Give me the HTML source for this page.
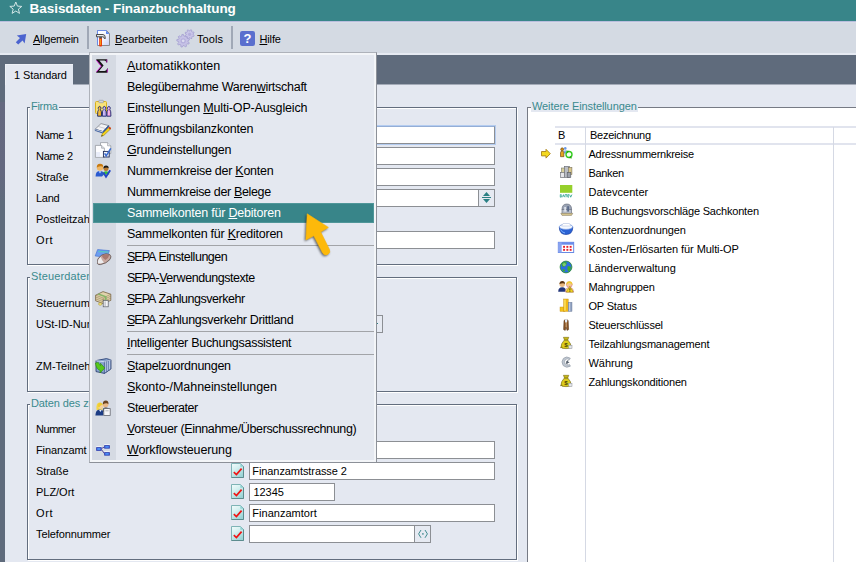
<!DOCTYPE html>
<html><head><meta charset="utf-8">
<style>
*{box-sizing:border-box;margin:0;padding:0}
html,body{width:856px;height:562px;overflow:hidden;background:#e4e8f1;font-family:"Liberation Sans",sans-serif;font-size:11px;color:#000}
.a{position:absolute}
.tl{white-space:nowrap;line-height:13px;font-size:11px}
.tl u,.mi u{text-decoration-thickness:1px;text-underline-offset:1px}
.fs{border:1px solid #626d7e;box-shadow:1px 1px 0 #fff, inset 1px 1px 0 #fff}
.lg{color:#3a8a8e;background:#e4e8f1;white-space:nowrap;line-height:13px;height:12px;overflow:hidden;padding:0 1px;letter-spacing:-0.1px}
.in{background:#fff;border:1px solid #8c8f94;height:18px;line-height:15px;padding-left:3px;white-space:nowrap;}
#menu{left:89px;top:52px;width:288px;height:411px;background:#e4e8f0;border:1px solid;border-color:#aeb2ba #8c9098 #8c9098 #aeb2ba;box-shadow:inset 0 0 0 2px #f3f5f8}
#gut{left:2px;top:2px;width:24px;height:405px;background:#d5dae3}
.mi{left:37px;white-space:nowrap;font-size:12.5px;line-height:15px;color:#000}
.sq{letter-spacing:-1px}
.sep{left:37px;width:247px;height:1px;background:#a2a4a8}
</style></head><body>
<!-- title bar -->
<div class="a" style="left:0;top:0;width:856px;height:21px;background:#388589"></div>
<div class="a" style="left:29.6px;top:1px;color:#fff;font-weight:bold;font-size:13.5px;line-height:16px;white-space:nowrap;letter-spacing:-0.052px">Basisdaten - Finanzbuchhaltung</div>
<!-- toolbar -->
<div class="a" style="left:0;top:21px;width:856px;height:34px;background:#d4dae3"></div>
<div class="a" style="left:0;top:53px;width:856px;height:2px;background:#e6eaf2"></div>
<div class="a" style="left:0;top:21px;width:856px;height:1px;background:#b9bedd"></div><div class="a" style="left:0;top:22px;width:856px;height:1px;background:#d9dce8"></div>
<div class="a tl" style="left:33px;top:33px;letter-spacing:-0.301px;"><u>A</u>llgemein</div>
<div class="a" style="left:87px;top:26px;width:2px;height:23px;background:#a0a8b6"></div>
<div class="a tl" style="left:115px;top:33px;letter-spacing:-0.062px;"><u>B</u>earbeiten</div>
<div class="a tl" style="left:197px;top:33px;letter-spacing:0.062px;">Tools</div>
<div class="a" style="left:231px;top:26px;width:2px;height:23px;background:#a0a8b6"></div>
<div class="a tl" style="left:259.5px;top:33px;letter-spacing:-0.143px;"><u>H</u>ilfe</div>
<!-- band + tab -->
<div class="a" style="left:0;top:55px;width:856px;height:29px;background:#5f6b7c"></div>
<div class="a" style="left:0;top:84px;width:5px;height:478px;background:#5f6b7c"></div><div class="a" style="left:0;top:102px;width:5px;height:100px;background:linear-gradient(#656980 0,#646880 70%,#5f6b7c 100%)"></div>
<div class="a" style="left:73px;top:84px;width:783px;height:1px;background:#a4abb8"></div><div class="a" style="left:5px;top:64px;width:68px;height:21px;background:#e4e8f1;border-top:1px solid #eef0f6;border-left:1px solid #eef0f6"></div>
<div class="a tl" style="left:14px;top:69px;letter-spacing:-0.103px;">1 Standard</div>

<!-- Firma -->
<div class="a fs" style="left:27px;top:107px;width:490px;height:158px"></div>
<div class="a lg" style="left:30px;top:100px;letter-spacing:-0.3px">Firma</div>
<div class="a tl" style="left:36px;top:129px;letter-spacing:-0.289px;">Name 1</div>
<div class="a tl" style="left:36px;top:150px;letter-spacing:-0.289px;">Name 2</div>
<div class="a tl" style="left:36px;top:171px;letter-spacing:-0.086px;">Straße</div>
<div class="a tl" style="left:36px;top:192px;letter-spacing:-0.246px;">Land</div>
<div class="a tl" style="left:36px;top:213px;">Postleitzahl</div>
<div class="a tl" style="left:36px;top:234px;letter-spacing:0.673px;">Ort</div>
<div class="a in" style="left:249px;top:126px;width:246px;border-color:#94aed6 #8c8f94 #8c8f94 #94aed6;box-shadow:0 0 0 1px #b4ccf0"></div>
<div class="a in" style="left:249px;top:147px;width:246px"></div>
<div class="a in" style="left:249px;top:168px;width:246px"></div>
<div class="a in" style="left:249px;top:189px;width:230px"></div>
<div class="a" style="left:478px;top:189px;width:17px;height:18px;border:1px solid #8c8f94;background:#e6eaf2"></div>
<div class="a in" style="left:249px;top:231px;width:246px"></div>

<!-- Steuerdaten -->
<div class="a fs" style="left:27px;top:277px;width:490px;height:115px"></div>
<div class="a lg" style="left:30px;top:270px;letter-spacing:0.15px">Steuerdaten</div>
<div class="a tl" style="left:36px;top:297px;">Steuernummer</div>
<div class="a tl" style="left:36px;top:318px;">USt-ID-Nummer</div>
<div class="a tl" style="left:36px;top:360px;">ZM-Teilnehmer</div>
<div class="a" style="left:366px;top:315px;width:17px;height:18px;border:1px solid #8c8f94;background:#e6eaf2"></div><div class="a" style="left:377px;top:323px;width:1px;height:1px;background:#2f8286"></div>

<!-- Daten -->
<div class="a fs" style="left:27px;top:404px;width:490px;height:156px"></div>
<div class="a lg" style="left:30px;top:397px">Daten des zuständigen Finanzamts</div>
<div class="a tl" style="left:36px;top:423px;letter-spacing:-0.462px;">Nummer</div>
<div class="a tl" style="left:36px;top:444px;letter-spacing:-0.095px;">Finanzamt</div>
<div class="a tl" style="left:36px;top:465px;letter-spacing:-0.086px;">Straße</div>
<div class="a tl" style="left:36px;top:486px;letter-spacing:-0.031px;">PLZ/Ort</div>
<div class="a tl" style="left:36px;top:507px;letter-spacing:0.673px;">Ort</div>
<div class="a tl" style="left:36px;top:528px;letter-spacing:-0.118px;">Telefonnummer</div>
<div class="a in" style="left:249px;top:441px;width:246px"></div>
<div class="a in" style="left:249px;top:462px;width:246px"></div>
<div class="a in" style="left:249px;top:483px;width:86px"></div>
<div class="a in" style="left:249px;top:504px;width:246px"></div>
<div class="a in" style="left:249px;top:525px;width:166px"></div>
<div class="a tl" style="left:252.3px;top:465px;letter-spacing:-0.082px;">Finanzamtstrasse 2</div>
<div class="a tl" style="left:253.5px;top:486px;letter-spacing:-0.059px;">12345</div>
<div class="a tl" style="left:252.3px;top:507px;letter-spacing:0.025px;">Finanzamtort</div>
<div class="a" style="left:414px;top:525px;width:17px;height:18px;border:1px solid #8c8f94;background:#e6eaf2"></div>
<svg class="a" style="left:231px;top:463px" width="14" height="16"><linearGradient id="ckg1" x1="0" y1="0" x2=".6" y2="1"><stop offset="0" stop-color="#f4fcfc"/><stop offset=".45" stop-color="#d4f0f0"/><stop offset="1" stop-color="#9cd4d6"/></linearGradient><path d="M0.5,0.5 H9.5 L12.5,3.5 V14.5 H0.5 Z" fill="url(#ckg1)" stroke="#7fb4b6" stroke-width="1"/><path d="M12.5,3.5 V14.5 H0.5" fill="none" stroke="#5c8c8e" stroke-width="1"/><path d="M9.3,0.6 V3.7 H12.4 Z" fill="#8fd0d2"/><path d="M2.8,9.2 L5.4,11.6 L10.6,5.6" fill="none" stroke="#f01414" stroke-width="1.7"/></svg>
<svg class="a" style="left:231px;top:484px" width="14" height="16"><linearGradient id="ckg2" x1="0" y1="0" x2=".6" y2="1"><stop offset="0" stop-color="#f4fcfc"/><stop offset=".45" stop-color="#d4f0f0"/><stop offset="1" stop-color="#9cd4d6"/></linearGradient><path d="M0.5,0.5 H9.5 L12.5,3.5 V14.5 H0.5 Z" fill="url(#ckg2)" stroke="#7fb4b6" stroke-width="1"/><path d="M12.5,3.5 V14.5 H0.5" fill="none" stroke="#5c8c8e" stroke-width="1"/><path d="M9.3,0.6 V3.7 H12.4 Z" fill="#8fd0d2"/><path d="M2.8,9.2 L5.4,11.6 L10.6,5.6" fill="none" stroke="#f01414" stroke-width="1.7"/></svg>
<svg class="a" style="left:231px;top:505px" width="14" height="16"><linearGradient id="ckg3" x1="0" y1="0" x2=".6" y2="1"><stop offset="0" stop-color="#f4fcfc"/><stop offset=".45" stop-color="#d4f0f0"/><stop offset="1" stop-color="#9cd4d6"/></linearGradient><path d="M0.5,0.5 H9.5 L12.5,3.5 V14.5 H0.5 Z" fill="url(#ckg3)" stroke="#7fb4b6" stroke-width="1"/><path d="M12.5,3.5 V14.5 H0.5" fill="none" stroke="#5c8c8e" stroke-width="1"/><path d="M9.3,0.6 V3.7 H12.4 Z" fill="#8fd0d2"/><path d="M2.8,9.2 L5.4,11.6 L10.6,5.6" fill="none" stroke="#f01414" stroke-width="1.7"/></svg>
<svg class="a" style="left:231px;top:526px" width="14" height="16"><linearGradient id="ckg4" x1="0" y1="0" x2=".6" y2="1"><stop offset="0" stop-color="#f4fcfc"/><stop offset=".45" stop-color="#d4f0f0"/><stop offset="1" stop-color="#9cd4d6"/></linearGradient><path d="M0.5,0.5 H9.5 L12.5,3.5 V14.5 H0.5 Z" fill="url(#ckg4)" stroke="#7fb4b6" stroke-width="1"/><path d="M12.5,3.5 V14.5 H0.5" fill="none" stroke="#5c8c8e" stroke-width="1"/><path d="M9.3,0.6 V3.7 H12.4 Z" fill="#8fd0d2"/><path d="M2.8,9.2 L5.4,11.6 L10.6,5.6" fill="none" stroke="#f01414" stroke-width="1.7"/></svg>

<!-- Right pane -->
<div class="a" style="left:527px;top:107px;width:340px;height:470px;background:#fff;border:1px solid #767a84"></div>
<div class="a" style="left:529px;top:108px;width:330px;height:4px;background:#fff"></div>
<div class="a lg" style="left:531px;top:100px">Weitere Einstellungen</div>
<div class="a" style="left:555px;top:126px;width:301px;height:2px;background:#e1e4ee"></div>
<div class="a" style="left:555px;top:143px;width:301px;height:2px;background:#e1e4ee"></div>
<div class="a" style="left:585px;top:127px;width:1px;height:435px;background:#d5d9e4"></div>
<div class="a" style="left:833px;top:127px;width:1px;height:435px;background:#d5d9e4"></div>
<div class="a tl" style="left:558px;top:129px;">B</div>
<div class="a tl" style="left:590px;top:129px;letter-spacing:-0.255px;">Bezeichnung</div>
<div class="a tl" style="left:588.5px;top:148px;letter-spacing:-0.25px;">Adressnummernkreise</div>
<div class="a tl" style="left:588.5px;top:167px;letter-spacing:-0.335px;">Banken</div>
<div class="a tl" style="left:588.5px;top:186px;letter-spacing:0.044px;">Datevcenter</div>
<div class="a tl" style="left:588.5px;top:205px;letter-spacing:-0.201px;">IB Buchungsvorschläge Sachkonten</div>
<div class="a tl" style="left:588.5px;top:224px;letter-spacing:-0.106px;">Kontenzuordnungen</div>
<div class="a tl" style="left:588.5px;top:243px;letter-spacing:-0.082px;">Kosten-/Erlösarten für Multi-OP</div>
<div class="a tl" style="left:588.5px;top:262px;letter-spacing:-0.01px;">Länderverwaltung</div>
<div class="a tl" style="left:588.5px;top:281px;letter-spacing:-0.145px;">Mahngruppen</div>
<div class="a tl" style="left:588.5px;top:300px;letter-spacing:-0.182px;">OP Status</div>
<div class="a tl" style="left:588.5px;top:319px;letter-spacing:-0.224px;">Steuerschlüssel</div>
<div class="a tl" style="left:588.5px;top:338px;letter-spacing:-0.18px;">Teilzahlungsmanagement</div>
<div class="a tl" style="left:588.5px;top:357px;letter-spacing:-0.049px;">Währung</div>
<div class="a tl" style="left:588.5px;top:376px;letter-spacing:-0.17px;">Zahlungskonditionen</div>

<svg class="a" style="left:0;top:0" width="856" height="562" viewBox="0 0 856 562">
<polygon points="15.8,2.0 17.4,6.1 21.8,6.4 18.4,9.1 19.5,13.4 15.8,11.0 12.1,13.4 13.2,9.1 9.8,6.4 14.2,6.1" fill="none" stroke="#d4e6e7" stroke-width="1" stroke-linejoin="miter"/>
<polygon points="16.8,35.6 26.2,33.9 24.6,43.4 22.6,40.6 18.2,44.6 15.8,42.2 20,38" fill="#4c64cf"/>
<defs><linearGradient id="pg" x1="0" y1="0" x2="1" y2="1"><stop offset="0" stop-color="#fff"/><stop offset=".5" stop-color="#f4f6ff"/><stop offset="1" stop-color="#c4cdf6"/></linearGradient></defs>
<path d="M97.5,30.5 H106.5 L109.5,33.5 V45.5 H97.5 Z" fill="url(#pg)" stroke="#8a8a8a" stroke-width="1"/>
<path d="M97.5,45 V30.5 H106.5" fill="none" stroke="#6a8ae6" stroke-width="1"/>
<path d="M106,30.5 L109.5,34 H106 Z" fill="#5a86ee"/>
<path d="M96.5,34.5 H103 Q105.5,34.5 105.3,38.5 L104.3,38.5 Q104.3,36.8 102.8,36.8 H96.5 Z" fill="#e8e8ec" stroke="#3a3a3a" stroke-width=".9" stroke-linejoin="round"/>
<rect x="99.2" y="37.6" width="2.8" height="9" rx=".8" fill="#e8360c"/>
<rect x="100.2" y="39" width=".9" height="6" fill="#f7b01c"/>
<rect x="99.2" y="36.8" width="2.8" height="1.6" fill="#555"/>
<path d="M187.9,41.8 L189.3,42.8 L188.7,44.1 L186.9,43.8 L186.2,44.6 L186.5,46.3 L185.2,46.9 L184.1,45.5 L183.1,45.6 L182.2,47.1 L180.9,46.8 L180.9,45.0 L180.0,44.4 L178.4,45.0 L177.6,43.9 L178.7,42.5 L178.5,41.5 L176.8,40.9 L176.9,39.5 L178.7,39.3 L179.1,38.3 L178.2,36.8 L179.2,35.8 L180.7,36.7 L181.7,36.2 L181.9,34.5 L183.4,34.4 L183.9,36.1 L185.0,36.3 L186.3,35.2 L187.4,36.0 L186.8,37.6 L187.4,38.5 L189.2,38.5 L189.5,39.8 L188.0,40.7Z" fill="#c6c2e6" stroke="#a49fd0" stroke-width=".8"/>
<circle cx="183.2" cy="40.8" r="2.6" fill="#b4afdc"/><circle cx="183.2" cy="40.8" r="1.4" fill="#dcdcf0"/>
<path d="M193.0,34.6 L194.2,35.4 L193.7,36.5 L192.3,36.3 L191.8,36.9 L192.0,38.3 L191.0,38.8 L190.1,37.7 L189.3,37.7 L188.5,38.9 L187.4,38.4 L187.6,37.0 L187.0,36.5 L185.6,36.7 L185.1,35.7 L186.2,34.8 L186.2,34.0 L185.0,33.2 L185.5,32.1 L186.9,32.3 L187.4,31.7 L187.2,30.3 L188.2,29.8 L189.1,30.9 L189.9,30.9 L190.7,29.7 L191.8,30.2 L191.6,31.6 L192.2,32.1 L193.6,31.9 L194.1,32.9 L193.0,33.8Z" fill="#c9c5e8" stroke="#a49fd0" stroke-width=".8"/>
<circle cx="189.6" cy="34.3" r="1.6" fill="#b4afdc"/>
<rect x="240" y="31" width="15" height="15" rx="2.2" fill="#5a6fce"/>
<text x="247.5" y="43.2" font-family="Liberation Sans" font-weight="bold" font-size="13" fill="#fff" text-anchor="middle">?</text>
<path d="M483,196 L486.5,192 L490,196 Z M483,199 L486.5,203 L490,199 Z" fill="#2a8084"/><rect x="482" y="197" width="9" height="1" fill="#2a8084"/>
<path d="M421,530 L418.6,533.9 L421,537.8 M425,530 L427.4,533.9 L425,537.8" stroke="#2f8286" stroke-width=".9" fill="none"/><rect x="422.2" y="533.2" width="1.4" height="1.4" fill="#2f8286"/>
<path d="M541.5,151.5 H546 V149.3 L550.3,153.7 L546,158.1 V155.9 H541.5 Z" fill="#f4d91e" stroke="#a8821e" stroke-width=".9" stroke-linejoin="round"/>
<circle cx="565.3" cy="148.4" r="1.3" fill="#6a9ae8"/><path d="M564,153.6 V150.8 Q565.3,149.6 566.6,150.8 V153.6 Z" fill="#7aaaf0"/>
<circle cx="562.2" cy="149.3" r="1.5" fill="#c88a18" stroke="#5a3a08" stroke-width=".5"/><path d="M560.5,156.7 V152.7 Q560.5,151 562.2,151 Q563.9,151 563.9,152.7 V156.7 Z" fill="#e4a420" stroke="#5a3a08" stroke-width=".6"/>
<circle cx="569" cy="154.5" r="3" fill="#f4fff0" stroke="#34cc20" stroke-width="1.4"/><path d="M566.2,150.6 L569.2,151 L567.4,153.2 Z" fill="#24a810"/><path d="M571.9,158.4 L568.9,158 L570.7,155.8 Z" fill="#24a810"/>
<rect x="561.5" y="168" width="4" height="9" fill="#d8cf9c" stroke="#7a7a6a" stroke-width=".6"/><rect x="564.5" y="166.3" width="5" height="11" fill="#b9bcc4" stroke="#63666e" stroke-width=".6"/><rect x="568.5" y="167.5" width="3.4" height="7" fill="#d9c88a" stroke="#7a705a" stroke-width=".6"/><rect x="560.5" y="172.5" width="4" height="5" fill="#e6e6ea" stroke="#63666e" stroke-width=".6"/><rect x="567.2" y="172.5" width="3.6" height="5" fill="#9ea2ac" stroke="#55585f" stroke-width=".6"/>
<rect x="560" y="185" width="12.3" height="7.8" fill="#96d02c"/>
<path d="M560.3,194.6 V197.2 M560.3,194.7 H561.4 L562,195.9 L561.4,197.1 H560.3 M562.7,197.2 L563.7,194.6 L564.7,197.2 M565,194.7 H567.2 M566.1,194.7 V197.2 M569,194.7 H567.8 V197.1 H569 M567.8,195.9 H568.8 M569.6,194.6 L570.7,197.2 L571.9,194.6" stroke="#1a9a86" stroke-width=".75" fill="none"/>
<path d="M562,209.5 Q562,204 566.8,204 Q571.6,204 571.6,209.5 Z" fill="#9aa3b4" stroke="#5f6675" stroke-width=".6"/><rect x="562" y="209.3" width="9.6" height="4" fill="#b8bfcc" stroke="#5f6675" stroke-width=".6"/><path d="M560.8,213.3 H572.8 L571.5,215.4 H562 Z" fill="#d8c890" stroke="#7a705a" stroke-width=".5"/><rect x="564.3" y="207" width="1.6" height="4.6" fill="#e4e8f2"/><rect x="567.2" y="206.2" width="1.8" height="5.4" fill="#5a6a8a"/>
<path d="M559.3,227 Q559.3,234.5 566,234.5 Q572.8,234.5 572.8,227 Z" fill="#2a62d4" stroke="#1a3fa0" stroke-width=".7"/><ellipse cx="566" cy="226.8" rx="6.7" ry="2.6" fill="#f4f8ff" stroke="#6a92e0" stroke-width=".7"/><path d="M561.5,226 L563,223.5 H569.5 L570.8,226 Z" fill="#fff" stroke="#aab8d8" stroke-width=".5"/><path d="M560.5,229.5 Q562,232.5 565,233" stroke="#7ab0ff" stroke-width="1" fill="none"/>
<rect x="558.3" y="242.3" width="15.4" height="10.2" fill="#fff" stroke="#5a7ee0" stroke-width=".9"/><rect x="558.3" y="242.3" width="15.4" height="2.4" fill="#6a8cea"/><rect x="558.3" y="242.3" width="3.4" height="10.2" fill="#8aa4f0"/>
<rect x="563.1" y="245.9" width="1.9" height="1.9" fill="#e8202a"/><rect x="566.4" y="245.9" width="1.9" height="1.9" fill="#e8202a"/><rect x="569.7" y="245.9" width="1.9" height="1.9" fill="#e8202a"/><rect x="563.1" y="248.9" width="1.9" height="1.9" fill="#e8202a"/><rect x="566.4" y="248.9" width="1.9" height="1.9" fill="#e8202a"/><rect x="569.7" y="248.9" width="1.9" height="1.9" fill="#e8202a"/>
<circle cx="566" cy="267" r="5.9" fill="#2c6fe0" stroke="#2a8a2a" stroke-width=".8"/><path d="M562,263.5 Q564,261.6 566.5,262.3 Q567.5,264 565.5,265.5 Q564.5,267.5 562.5,266.5 Q561,265 562,263.5 Z" fill="#3fae2e"/><path d="M567.5,266.5 Q570,265.5 571,267.5 Q570.8,270.5 568.5,271.8 Q567,270 567.5,266.5 Z" fill="#3fae2e"/><path d="M562.5,269 Q564.5,268.6 565.3,270.6 Q564.3,272 563,271.2 Z" fill="#3fae2e"/><circle cx="564.3" cy="264.6" r="1.6" fill="#fff" opacity=".35"/>
<circle cx="562.2" cy="284.3" r="2.7" fill="#e8b880"/><path d="M559.4,284 Q559.6,281 562.3,281 Q565,281 565,284 Q563.5,282.6 559.4,284 Z" fill="#5a3412"/><path d="M558.2,291.8 Q558.2,287.2 562.2,287.2 Q566.2,287.2 566.2,291.8 Z" fill="#23367a"/>
<circle cx="569.3" cy="284.6" r="2.9" fill="#f2c890" stroke="#d060b0" stroke-width=".5"/><path d="M566.2,285.5 Q566,281.2 569.4,281.2 Q572.8,281.2 572.5,285.5 Q571.5,282.8 569.4,283 Q567.3,282.8 566.2,285.5 Z" fill="#f0cc30"/><path d="M565.2,292 Q565.2,287.6 569.3,287.6 Q573.6,287.6 573.6,292 Z" fill="#f4e070" stroke="#d060b0" stroke-width=".4"/><path d="M569.8,286.3 L573.4,292.2 H566.2 Z" fill="#f8d820" stroke="#8a6a10" stroke-width=".5"/><rect x="569.5" y="288.3" width=".8" height="2.2" fill="#222"/><rect x="569.5" y="290.9" width=".8" height=".8" fill="#222"/>
<rect x="560" y="307" width="5" height="4.4" fill="#f4c21a" stroke="#c08a10" stroke-width=".4"/><rect x="563.6" y="299" width="4.6" height="12.4" fill="#f0b818" stroke="#c08a10" stroke-width=".4"/><rect x="564.2" y="299.6" width="1.5" height="11" fill="#fbe060"/><rect x="568.2" y="302.3" width="3.8" height="9.1" fill="#8fa0c0" stroke="#64748f" stroke-width=".4"/><rect x="569" y="302.8" width="1.2" height="8.2" fill="#c0cce0"/>
<path d="M564,320.5 Q566,318 568.2,320.5 L568.6,329.6 L567,330.4 L566.2,327 L565.2,330.4 L563.6,329.6 Z" fill="#8a5426" stroke="#4a2a10" stroke-width=".5"/><path d="M564.8,319.6 Q566.1,318.3 567.4,319.6 L567,322.5 H565.2 Z" fill="#e4eefc"/><rect x="565.7" y="322" width=".9" height="5.5" fill="#d8b890"/>
<g transform="translate(0,0)"><path d="M563.4,337.3 H568.8 L567.6,340.2 H564.6 Z" fill="#c8b818" stroke="#6a5c08" stroke-width=".5"/><path d="M564.2,340.2 H568 Q571.2,343.5 571,347.2 Q570.8,348.6 566,348.6 Q561,348.6 561,347.2 Q561,343.5 564.2,340.2 Z" fill="#dccc1c" stroke="#6a5c08" stroke-width=".6"/><path d="M560,348 Q561,346.6 562.6,347.4" stroke="#6a5c08" stroke-width=".6" fill="none"/><text x="566" y="347.2" font-family="Liberation Sans" font-weight="bold" font-size="6.2" fill="#4a3e04" text-anchor="middle">$</text><rect x="568.8" y="345.2" width="3.2" height="3.4" fill="#e4e6ea" stroke="#8a8e96" stroke-width=".5"/></g>
<g transform="translate(0,38)"><path d="M563.4,337.3 H568.8 L567.6,340.2 H564.6 Z" fill="#c8b818" stroke="#6a5c08" stroke-width=".5"/><path d="M564.2,340.2 H568 Q571.2,343.5 571,347.2 Q570.8,348.6 566,348.6 Q561,348.6 561,347.2 Q561,343.5 564.2,340.2 Z" fill="#dccc1c" stroke="#6a5c08" stroke-width=".6"/><path d="M560,348 Q561,346.6 562.6,347.4" stroke="#6a5c08" stroke-width=".6" fill="none"/><text x="566" y="347.2" font-family="Liberation Sans" font-weight="bold" font-size="6.2" fill="#4a3e04" text-anchor="middle">$</text><rect x="568.8" y="345.2" width="3.2" height="3.4" fill="#e4e6ea" stroke="#8a8e96" stroke-width=".5"/></g>
<path d="M570.3,358.2 Q566.5,355.6 563.4,358.4 Q560.6,361.8 563.2,365.6 Q566.4,368.6 570.4,366.2 L569.6,364.6 Q567,366 565.2,364 Q563.6,361.8 565.4,359.6 Q567.2,358 569.4,359.8 Z" fill="#c0c8d2" stroke="#8a929e" stroke-width=".6"/><path d="M566.3,361.2 L568.6,359.8 L568,361.6 L569.6,362.4 L567.4,363.2 L567.8,364.8 L566,363.4 Z" fill="#5a6470"/>
</svg>
<!-- Menu -->
<div id="menu" class="a">
<div id="gut" class="a"></div>
<div class="a" style="left:3px;top:150px;width:281px;height:20px;background:#388589;border:1px solid #4f9699"></div>
<div class="a mi" style="top:6px;letter-spacing:0.012px"><u>A</u>utomatikkonten</div>
<div class="a mi" style="top:27px;letter-spacing:-0.268px">Belegübernahme Waren<u>w</u>irtschaft</div>
<div class="a mi" style="top:48px;letter-spacing:-0.163px">Einstellungen <u>M</u>ulti-OP-Ausgleich</div>
<div class="a mi" style="top:69px;letter-spacing:-0.188px"><u>E</u>röffnungsbilanzkonten</div>
<div class="a mi" style="top:90px;letter-spacing:-0.23px"><u>G</u>rundeinstellungen</div>
<div class="a mi" style="top:111px;letter-spacing:-0.273px">Nummernkreise der <u>K</u>onten</div>
<div class="a mi" style="top:132px;letter-spacing:-0.349px">Nummernkreise der <u>B</u>elege</div>
<div class="a mi" style="top:153px;letter-spacing:-0.205px;color:#fff">Sammelkonten für <u>D</u>ebitoren</div>
<div class="a mi" style="top:174px;letter-spacing:-0.252px">Sammelkonten für <u>K</u>reditoren</div>
<div class="a sep" style="top:192px"></div>
<div class="a mi" style="top:197px;letter-spacing:-0.476px"><span class="sq"><u>S</u>EPA</span> Einstellungen</div>
<div class="a mi" style="top:218px;letter-spacing:-0.45px"><span class="sq">SEPA</span>-<u>V</u>erwendungstexte</div>
<div class="a mi" style="top:239px;letter-spacing:-0.451px"><span class="sq"><u>S</u>EPA</span> Zahlungsverkehr</div>
<div class="a mi" style="top:260px;letter-spacing:-0.336px"><span class="sq"><u>S</u>EPA</span> Zahlungsverkehr Drittland</div>
<div class="a sep" style="top:278px"></div>
<div class="a mi" style="top:283px;letter-spacing:-0.282px"><u>I</u>ntelligenter Buchungsassistent</div>
<div class="a sep" style="top:301px"></div>
<div class="a mi" style="top:306px;letter-spacing:-0.273px"><u>S</u>tapelzuordnungen</div>
<div class="a mi" style="top:327px;letter-spacing:-0.068px"><u>S</u>konto-/Mahneinstellungen</div>
<div class="a mi" style="top:348px;letter-spacing:-0.434px">Steuerberater</div>
<div class="a mi" style="top:369px;letter-spacing:-0.356px"><u>V</u>orsteuer (Einnahme/Überschussrechnung)</div>
<div class="a mi" style="top:390px;letter-spacing:-0.117px"><u>W</u>orkflowsteuerung</div>

</div>

<svg class="a" style="left:0;top:0" width="856" height="562" viewBox="0 0 856 562">
<path d="M96.3,59.3 H107.2 V62.6 H106.4 Q106,60.6 104.2,60.6 H99.4 L103.6,65.6 L99,71 H104.6 Q106.6,71 107.2,68.6 H108 L107.4,72.8 H96.3 V72 L101.2,66.2 L96.3,60.2 Z" fill="#141414"/>
<path d="M96.3,60.2 L101.2,66.2 L96.3,72" stroke="#e010e0" stroke-width=".8" fill="none"/><path d="M106.8,59.6 V62.4 M107.6,68.8 L107.2,72.4" stroke="#e010e0" stroke-width=".7"/>
<rect x="95.5" y="101.5" width="11" height="12" rx="1" fill="#f8e27a" stroke="#d8b020" stroke-width="1"/><rect x="98.8" y="100.3" width="4.6" height="2.4" rx=".6" fill="#d4d6de" stroke="#8e929c" stroke-width=".6"/>
<path d="M97.6,116.2 Q97.39999999999999,110.6 98.69999999999999,109.6 Q97.89999999999999,108.4 98.39999999999999,107.2 Q99.6,105.6 100.8,107.2 Q101.3,108.4 100.5,109.6 Q101.8,110.6 101.6,116.2 Z" fill="#f0b020" stroke="#16246a" stroke-width=".9"/><path d="M99.0,108 V115" stroke="#fff" stroke-width=".6" opacity=".45"/><path d="M102.3,116.2 Q102.1,110.6 103.39999999999999,109.6 Q102.6,108.4 103.1,107.2 Q104.3,105.6 105.5,107.2 Q106.0,108.4 105.2,109.6 Q106.5,110.6 106.3,116.2 Z" fill="#c4b0f0" stroke="#16246a" stroke-width=".9"/><path d="M103.7,108 V115" stroke="#fff" stroke-width=".6" opacity=".45"/><path d="M106.9,116.2 Q106.7,110.6 108.0,109.6 Q107.2,108.4 107.7,107.2 Q108.9,105.6 110.10000000000001,107.2 Q110.60000000000001,108.4 109.80000000000001,109.6 Q111.10000000000001,110.6 110.9,116.2 Z" fill="#f4a8e0" stroke="#16246a" stroke-width=".9"/><path d="M108.30000000000001,108 V115" stroke="#fff" stroke-width=".6" opacity=".45"/>
<path d="M95.2,129.2 L101,123.6 L108.6,125.6 L103,131.6 Z" fill="#f4f4f6" stroke="#70747c" stroke-width=".7"/><path d="M98,126.4 L105.6,128.6" stroke="#b0b4bc" stroke-width=".6"/><path d="M95.2,129.2 L103,131.6 L108.6,125.6 L108.6,127 L103,133.2 L95.2,130.6 Z" fill="#2a5cb4" stroke="#18387a" stroke-width=".5"/><path d="M95.2,129.2 L103,131.6 L103,132.4 L95.2,130 Z" fill="#dcdce0"/>
<path d="M109.4,127 L111,128.6 L103.8,135.4 L101.4,136.4 L102.2,133.8 Z" fill="#f2d21c" stroke="#8a7408" stroke-width=".5"/><path d="M108.4,127.9 L109.4,127 Q110.6,126.6 111,128.6 L110,129.6 Z" fill="#d8301c"/><path d="M101.4,136.4 L101.9,134.9 L102.9,135.8 Z" fill="#222"/>
<path d="M100.5,142.6 H107.6 L110.8,145.8 V153.6 H100.5 Z" fill="#fff" stroke="#8c9098" stroke-width=".7"/><path d="M107.6,142.6 V145.8 H110.8" fill="#e8eaf0" stroke="#8c9098" stroke-width=".6"/>
<path d="M95.4,145.4 H101.6 L104.4,148.2 V157.4 H95.4 Z" fill="#fdfdff" stroke="#8c9098" stroke-width=".7"/><path d="M101.6,145.4 V148.2 H104.4" fill="#e0e3ea" stroke="#8c9098" stroke-width=".6"/><path d="M96,152 H100 V157 H96 Z" fill="#dfe6f6" opacity=".7"/>
<rect x="103.4" y="151.4" width="5.8" height="5.6" fill="#f4f6fa" stroke="#1e2c5a" stroke-width=".9"/><path d="M104.6,153.4 L106.2,155.8 L110.8,148.4" stroke="#3c6cd0" stroke-width="1.6" fill="none"/>
<circle cx="100" cy="167.6" r="3.2" fill="#f0b868"/><path d="M96.8,167.6 Q96.6,163.8 100,163.8 Q103.4,163.8 103.2,167 Q101,165.4 96.8,167.6 Z" fill="#c87a10"/><path d="M95.6,176.4 Q95.6,171 100,171 Q103.6,171 104,174.4 L102,176.4 Z" fill="#2a5ad0"/><path d="M98.6,171.2 L100,173.6 L101.4,171.2 Z" fill="#bcd8ff"/>
<circle cx="106" cy="168.6" r="2.5" fill="#b87830"/><path d="M103.4,168.4 Q103.4,165.4 106,165.4 Q108.8,165.4 108.6,168.2 Q106.6,166.8 103.4,168.4 Z" fill="#181818"/><path d="M102.8,174.6 Q102.8,171.2 106,171.2 Q109.2,171.2 109.2,174.6 Z" fill="#38c038"/>
<path d="M103.4,172.6 L106,176.8 L110.2,170.2" stroke="#2448c8" stroke-width="1.9" fill="none"/>
<path d="M97.6,249.6 L109.4,250.6 L107,257.2 L95.2,256 Z" fill="#6c9ef0" stroke="#3c6cd0" stroke-width=".6"/><path d="M98.4,251.4 L108.4,252.2" stroke="#58c8c0" stroke-width="1.2"/>
<path d="M97.4,263.6 Q96.4,258.6 101.4,255.2 Q106.4,252.6 109.8,254.6 Q112,256.6 110,259.4 Q106.4,263.6 100.4,264.6 Q98,264.8 97.4,263.6 Z" fill="#c8a8a0" stroke="#4a4444" stroke-width=".7"/><path d="M97.8,263 Q97.4,259.6 100.8,257 Q101.8,260.6 104,262.6 Q100,264.4 97.8,263 Z" fill="#ececee"/><path d="M101.6,255.6 Q106,253.4 109.4,255 Q108.6,258.2 105.4,260 Q102.8,258.4 101.6,255.6 Z" fill="#a87870"/>
<path d="M95.6,295.2 L103,291.6 L110.8,294.2 L110.8,300.4 L103.2,303.6 L95.6,300.8 Z" fill="#e0d2ac" stroke="#6a5434" stroke-width=".7"/><path d="M95.6,295.2 L103.2,298 L110.8,294.2 M103.2,298 V303.6 M95.6,297 L103.2,299.8 L110.8,296.2 M95.6,298.9 L103.2,301.7 L110.8,298.2" stroke="#8a744c" stroke-width=".5" fill="none"/><path d="M99,293.6 L106.6,296.2 L106.6,302 L104.8,302.8 L104.8,297.2 L97.2,294.4 Z" fill="#86b468"/>
<rect x="103.2" y="300.4" width="5" height="6.4" fill="#f4f4f6" stroke="#5a5e66" stroke-width=".7"/><rect x="104.6" y="301.4" width="1" height="4.6" fill="#b0b4bc"/><ellipse cx="100.2" cy="304" rx="1.7" ry="1.3" fill="#f0e080" stroke="#a89830" stroke-width=".5"/>
<path d="M96,360.6 L106.4,358.6 L110.8,359.8 L110.8,369 L104.4,373.4 L96,371.6 Z" fill="#88a4d0" stroke="#1e3468" stroke-width=".8"/><path d="M104.4,361.8 L110.8,359.8 V369 L104.4,373.4 Z" fill="#b4c6e4" stroke="#1e3468" stroke-width=".6"/><path d="M96,360.6 L104.4,361.8 L110.8,359.8" stroke="#e8f0ff" stroke-width=".7" fill="none"/><path d="M106.4,361.4 V372 M108.4,360.8 V370.6" stroke="#4a6498" stroke-width=".7"/>
<path d="M95.4,363 L98.4,362.4 Q99.4,365.2 100.6,365.6 L100.4,363.2 L104.8,368 L100,373 L100.2,370.4 Q96.4,369.6 95.4,363 Z" fill="#58c81c" stroke="#2a8a0c" stroke-width=".6"/>
<circle cx="105.6" cy="404.6" r="2.8" fill="#e8b888"/><path d="M102.8,404.4 Q102.6,400.6 105.8,400.6 Q108.8,400.8 108.4,404.2 Q106.6,402.4 102.8,404.4 Z" fill="#6a4420"/><path d="M102.4,412 Q102.4,407.6 105.8,407.6 Q109.4,407.6 109.4,411 Z" fill="#38404c"/>
<path d="M96.6,410 Q95.6,402.6 99.6,402.4 Q103,402.6 102.6,407 L102,411 Z" fill="#f2d648"/><circle cx="100.6" cy="406.6" r="2.3" fill="#f4d0a8"/><path d="M97.8,406.6 Q97.6,402.8 100.4,402.8 Q102.6,403 102.6,405 Q100.4,404.4 99.4,407.4 Z" fill="#f0cc30"/><path d="M95.4,415.6 Q95.6,409.8 99.6,409.6 Q102.8,409.8 103.4,412.4 L103.4,415.6 Z" fill="#1c3c84"/><path d="M99,409.8 L100.4,412 L101.8,409.8 Z" fill="#e8f0ff"/>
<rect x="103.8" y="408.6" width="6.4" height="6.8" fill="#f6f6f8" stroke="#666a72" stroke-width=".8"/><path d="M105.4,410.8 H108.6" stroke="#9a9ea6" stroke-width=".7"/>
<rect x="96.2" y="446.3" width="5.4" height=".8" fill="#f8f9fc"/><rect x="96.2" y="447.2" width="5.4" height="3.6" fill="#2436b0"/><rect x="97.2" y="448.0" width="3.4000000000000004" height="2.0" fill="#4c8cf4"/><rect x="104.2" y="444.3" width="5.6" height=".8" fill="#f8f9fc"/><rect x="104.2" y="445.2" width="5.6" height="3.4" fill="#2436b0"/><rect x="105.2" y="446.0" width="3.5999999999999996" height="1.7999999999999998" fill="#4c8cf4"/><rect x="104.2" y="451.3" width="5.6" height=".8" fill="#f8f9fc"/><rect x="104.2" y="452.2" width="5.6" height="3.4" fill="#2436b0"/><rect x="105.2" y="453.0" width="3.5999999999999996" height="1.7999999999999998" fill="#4c8cf4"/><path d="M101.6,448.4 L104.2,447.2 M101.6,449.6 L104.2,453.4" stroke="#3a2a8a" stroke-width=".8"/>
</svg>
<!-- cursor -->
<svg class="a" style="left:0;top:0;filter:drop-shadow(-1px 1px 0.8px rgba(40,40,40,.7))" width="856" height="562" viewBox="0 0 856 562"><path d="M307.2,213.8 L328.4,227.4 L320.7,232 L329.3,249.2 A3.8,3.8 0 0 1 322.5,252.8 L313.8,235.8 L305.9,239.9 Z" fill="#fdb90a" stroke="#fdb90a" stroke-width=".6" stroke-linejoin="round"/></svg>
</body></html>
